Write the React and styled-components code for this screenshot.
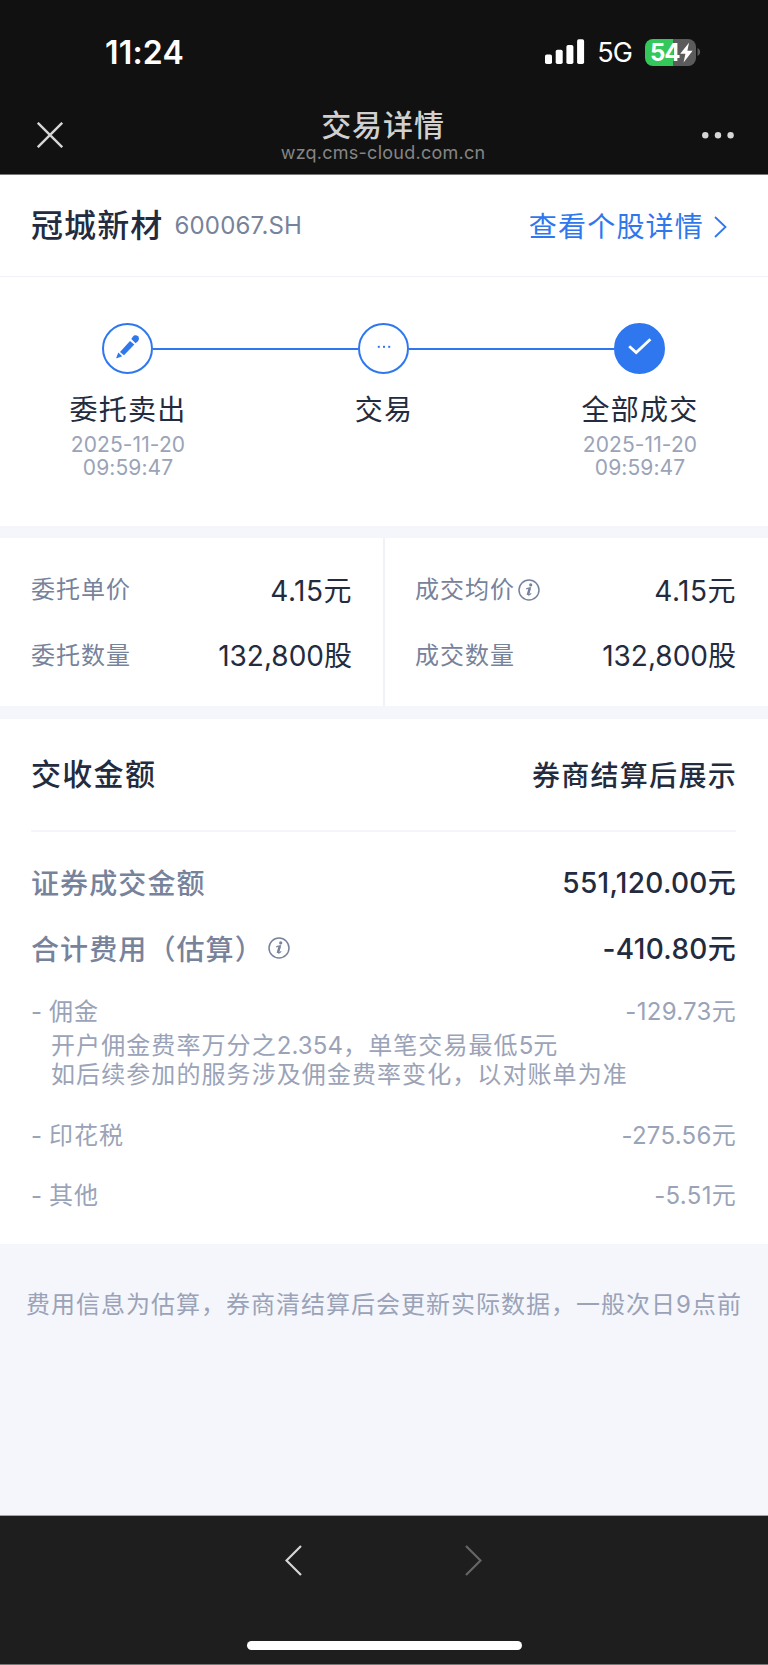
import styled, { createGlobalStyle, ThemeProvider } from "styled-components";

const theme = {
  ink: "#232b3e",
  label: "#77829b",
  muted: "#9aa3b8",
  blue: "#2f77ee",
  pageBg: "#f4f6fb",
  borderColor: "#f0f2f8",
};

const GlobalStyles = createGlobalStyle`
  * {
    box-sizing: border-box;
  }
  body {
    margin: 0;
    background-color: #1e1e1e;
    font-family: Inter, "Noto Sans CJK SC", sans-serif;
    -webkit-font-smoothing: antialiased;
  }
  svg {
    display: block;
    flex-shrink: 0;
  }
`;

const Screen = styled.div`
  width: 768px;
  height: 1665px;
  display: flex;
  flex-direction: column;
  overflow: hidden;
  white-space: nowrap;
  color: ${(props) => props.theme.ink};
`;

/* top bars */

const TopArea = styled.header`
  height: 175px;
  flex-shrink: 0;
  background-color: #111111;
  border-bottom: 1px solid #777777;
`;

const StatusBar = styled.div`
  height: 105px;
  display: flex;
  justify-content: space-between;
  padding: 32px 67px 0 105px;
  color: white;
`;

const Clock = styled.div`
  font-size: 32px;
  line-height: 41px;
  font-weight: 600;
  letter-spacing: 0.2px;
`;

const StatusRight = styled.div`
  height: 40px;
  display: flex;
  align-items: center;
`;

const Network = styled.span`
  margin: 2px 13px 0 12px;
  font-size: 27px;
  line-height: 32px;
  letter-spacing: -0.9px;
`;

const Battery = styled.div`
  width: 51px;
  height: 27px;
  display: flex;
  align-items: center;
  padding-left: 5px;
  border-radius: 8px;
  background: linear-gradient(to right, #34c759 54%, #5b5b5b 54%);
  font-size: 24px;
  line-height: 27px;
  font-weight: 700;
  letter-spacing: -1px;
`;

const NavBar = styled.div`
  display: flex;
  align-items: flex-start;
  justify-content: space-between;
  padding: 0 34px 0 37px;
`;

const NavIcon = styled.div`
  width: 32px;
  padding-top: 17px;
`;

const NavTitle = styled.div`
  margin-right: 5px;
  padding-top: 1px;
  text-align: center;
`;

const PageName = styled.div`
  font-size: 30px;
  line-height: 38px;
  font-weight: 500;
  letter-spacing: 0.9px;
  color: #d0d0d0;
`;

const PageUrl = styled.div`
  font-size: 18px;
  line-height: 20px;
  margin-top: -1px;
  letter-spacing: 0.25px;
  color: #858585;
`;

/* stock header */

const Panel = styled.section`
  flex-shrink: 0;
  background-color: white;
`;

const StockRow = styled.div`
  height: 102px;
  display: flex;
  align-items: center;
  justify-content: space-between;
  padding: 0 41px 0 31px;
  border-bottom: 1px solid ${(props) => props.theme.borderColor};
`;

const StockInfo = styled.div`
  display: flex;
  align-items: center;
`;

const StockName = styled.h1`
  margin: 0;
  font-size: 32px;
  line-height: 40px;
  font-weight: 500;
  letter-spacing: 1.1px;
`;

const StockCode = styled.span`
  margin-left: 11px;
  font-size: 24px;
  letter-spacing: 0.2px;
  color: ${(props) => props.theme.label};
`;

const StockLink = styled.a`
  display: flex;
  align-items: center;
  gap: 10px;
  padding-top: 2px;
  font-size: 28px;
  line-height: 36px;
  letter-spacing: 1.2px;
  color: ${(props) => props.theme.blue};
`;

/* progress */

const Progress = styled.div`
  height: 249px;
  padding-top: 46px;
`;

const Track = styled.div`
  display: flex;
  align-items: center;
  padding: 0 103px 0 102px;
`;

const Dot = styled.div`
  width: 51px;
  height: 51px;
  display: flex;
  align-items: center;
  justify-content: center;
  border: 2px solid ${(props) => props.theme.blue};
  border-radius: 50%;
  background-color: ${(props) => (props.$done ? props.theme.blue : "white")};
`;

const Connector = styled.div`
  flex: 1;
  height: 2px;
  background-color: ${(props) => props.theme.blue};
`;

const Steps = styled.div`
  display: grid;
  grid-template-columns: repeat(3, 1fr);
  margin-top: 18px;
  text-align: center;
`;

const StepName = styled.div`
  font-size: 28px;
  line-height: 36px;
  letter-spacing: 1.2px;
`;

const StepTime = styled.div`
  margin-top: 5px;
  font-size: 21px;
  line-height: 23.3px;
  letter-spacing: 0.1px;
  color: ${(props) => props.theme.muted};
`;

const Divider = styled.div`
  flex-shrink: 0;
  height: ${(props) => props.$height}px;
  background-color: ${(props) => props.theme.pageBg};
`;

/* prices */

const Prices = styled(Panel)`
  height: 168px;
  display: grid;
  grid-template-columns: 383px 385px;
`;

const PriceColumn = styled.div`
  padding: 19px 31px 0 31px;
  & + & {
    border-left: 2px solid ${(props) => props.theme.borderColor};
    padding-left: 30px;
    padding-right: 32px;
  }
`;

const Row = styled.div`
  height: ${(props) => props.$height}px;
  display: flex;
  align-items: center;
  justify-content: space-between;
`;

const Label = styled.span`
  display: flex;
  align-items: center;
  font-size: 24px;
  line-height: 32px;
  letter-spacing: 1px;
  color: ${(props) => props.theme.label};
  svg {
    margin-left: 3px;
  }
`;

const Value = styled.span`
  font-size: 28px;
  line-height: 36px;
  letter-spacing: ${(props) => props.$tracking || 0}px;
`;

const PriceRow = styled(Row)`
  height: 66px;
  &:first-child ${Value} {
    padding-top: 1px;
  }
`;

/* settlement */

const Settlement = styled(Panel)`
  height: 525px;
  padding: 0 32px 0 31px;
`;

const SettlementHead = styled.div`
  height: 113px;
  display: flex;
  align-items: center;
  justify-content: space-between;
  border-bottom: 2px solid #f5f6f9;
  margin-bottom: 18px;
  font-weight: 500;
`;

const SettlementTitle = styled.h2`
  margin: 0 0 2px;
  font-size: 30px;
  line-height: 40px;
  font-weight: 500;
  letter-spacing: 1.3px;
`;

const SettlementStatus = styled.span`
  margin: 2px -1px 0 0;
  font-size: 28px;
  line-height: 38px;
  letter-spacing: 1.3px;
`;

const StrongLabel = styled(Label)`
  padding-top: 1px;
  font-size: 28px;
  line-height: 38px;
  font-weight: 500;
  letter-spacing: 1.1px;
  svg {
    margin: 0 0 3px 4px;
  }
`;

const StrongValue = styled(Value)`
  font-weight: 500;
`;

const FeeRow = styled(Row)`
  height: ${(props) => (props.$withNote ? 41 : 60)}px;
  margin-top: ${(props) => (props.$withNote ? 9 : 0)}px;
`;

const FeeLabel = styled(Label)`
  color: ${(props) => props.theme.muted};
  gap: 6px;
`;

const FeeValue = styled(Value)`
  font-size: 24px;
  line-height: 32px;
  color: ${(props) => props.theme.muted};
`;

const FeeNote = styled.div`
  margin-bottom: 17px;
  padding-left: 20px;
  font-size: 24px;
  line-height: 28.5px;
  letter-spacing: 1.08px;
  color: ${(props) => props.theme.muted};
`;

const Digits = styled.span`
  letter-spacing: 0.1px;
`;

const Footnote = styled.div`
  flex: 1;
  padding: 43px 0 0 26px;
  background-color: ${(props) => props.theme.pageBg};
  font-size: 24px;
  line-height: 36px;
  letter-spacing: 1px;
  color: ${(props) => props.theme.muted};
`;

/* browser toolbar */

const BottomBar = styled.footer`
  height: 150px;
  flex-shrink: 0;
  display: flex;
  flex-direction: column;
  align-items: center;
  justify-content: space-between;
  padding: 29px 0 14px;
  border-top: 1px solid #a2a5a5;
  border-bottom: 1px solid #777777;
  background-color: #1e1e1e;
`;

const HistoryButtons = styled.div`
  width: 197px;
  margin-right: 1px;
  display: flex;
  justify-content: space-between;
`;

const HomeIndicator = styled.div`
  width: 275px;
  height: 9px;
  border-radius: 5px;
  background-color: white;
`;

function Signal() {
  return (
    <svg width="40" height="26" viewBox="0 0 40 26" fill="white">
      <rect x="0" y="15.5" width="7" height="9.5" rx="1.8" />
      <rect x="10.7" y="10.8" width="7" height="14.2" rx="1.8" />
      <rect x="21.4" y="6" width="7" height="19" rx="1.8" />
      <rect x="32.1" y="0.3" width="7" height="24.7" rx="1.8" />
    </svg>
  );
}

function Bolt() {
  return (
    <svg width="13" height="23" viewBox="0 0 13 23" fill="white">
      <path d="M9 1.8 L0.2 12.8 H5.4 L3.6 21.4 L12.6 9.8 H7.4 Z" />
    </svg>
  );
}

function InfoIcon() {
  return (
    <svg width="22" height="22" viewBox="0 0 22 22" fill="none" stroke="#77829b">
      <circle cx="11" cy="11" r="10" strokeWidth="1.5" />
      <circle cx="12.7" cy="5.9" r="1.6" fill="#77829b" stroke="none" />
      <path
        d="M8.2 9.8 C9.6 9.6 10.9 9.2 12.3 8.8 L10.3 15.2 C10 16.5 11.7 15.9 13.2 14.3"
        strokeWidth="1.2"
      />
      <path d="M11.7 9.3 L9.8 16" strokeWidth="2.4" />
    </svg>
  );
}

function Chevron({ width, height, color, stroke, left }) {
  const d = left
    ? `M${width - 1} 1 L1.5 ${height / 2} L${width - 1} ${height - 1}`
    : `M1 1 L${width - 1.5} ${height / 2} L1 ${height - 1}`;
  return (
    <svg width={width} height={height} fill="none" stroke={color} strokeWidth={stroke}>
      <path d={d} />
    </svg>
  );
}

const prices = [
  [
    { label: "委托单价", value: "4.15元", tracking: 0.5 },
    { label: "委托数量", value: "132,800股" },
  ],
  [
    { label: "成交均价", value: "4.15元", tracking: 0.5, info: true },
    { label: "成交数量", value: "132,800股" },
  ],
];

const steps = [
  { name: "委托卖出", date: "2025-11-20", time: "09:59:47" },
  { name: "交易" },
  { name: "全部成交", date: "2025-11-20", time: "09:59:47" },
];

function App() {
  return (
    <ThemeProvider theme={theme}>
      <GlobalStyles />
      <Screen>
        <TopArea>
          <StatusBar>
            <Clock>11:24</Clock>
            <StatusRight>
              <Signal />
              <Network>5G</Network>
              <Battery>
                54
                <Bolt />
              </Battery>
              <svg width="5" height="10" viewBox="0 0 5 10" fill="#5b5b5b">
                <path d="M1.5 1 C5 2.5 5 7.5 1.5 9 Z" />
              </svg>
            </StatusRight>
          </StatusBar>
          <NavBar>
            <NavIcon>
              <svg width="26" height="26" fill="none" stroke="#d6d6d6" strokeWidth="2.4">
                <path d="M0.8 0.8 L25.2 25.2 M25.2 0.8 L0.8 25.2" />
              </svg>
            </NavIcon>
            <NavTitle>
              <PageName>交易详情</PageName>
              <PageUrl>wzq.cms-cloud.com.cn</PageUrl>
            </NavTitle>
            <NavIcon>
              <svg width="32" height="26" fill="#d6d6d6">
                <circle cx="3.3" cy="13.3" r="3.2" />
                <circle cx="16" cy="13.3" r="3.2" />
                <circle cx="28.6" cy="13.3" r="3.2" />
              </svg>
            </NavIcon>
          </NavBar>
        </TopArea>

        <Panel>
          <StockRow>
            <StockInfo>
              <StockName>冠城新材</StockName>
              <StockCode>600067.SH</StockCode>
            </StockInfo>
            <StockLink>
              查看个股详情
              <Chevron width={13} height={22} color={theme.blue} stroke={1.8} />
            </StockLink>
          </StockRow>
          <Progress>
            <Track>
              <Dot>
                <svg width="24" height="28" viewBox="0 0 24 28" fill={theme.blue}>
                  <path d="M15.3 4 L16.8 1.8 C18.2 -0.1 20.6 0 22 1.2 C23.4 2.7 23.2 4.8 21.8 6.2 L19.6 8.2 Z" />
                  <path d="M4 17 L14 6 L18.3 9.6 L8 20.2 Z" />
                  <path d="M2.3 17.4 L6.2 21.2 L0.8 23.2 C0.3 23.2 0.2 22.8 0.4 22.4 Z" />
                </svg>
              </Dot>
              <Connector />
              <Dot>
                <svg width="14" height="8" viewBox="0 0 14 8" fill={theme.blue}>
                  <rect x="0.8" y="0.8" width="2" height="2" />
                  <rect x="6" y="0.8" width="2" height="2" />
                  <rect x="11.2" y="0.8" width="2" height="2" />
                </svg>
              </Dot>
              <Connector />
              <Dot $done>
                <svg width="24" height="21" viewBox="0 0 24 21" fill="none" stroke="white">
                  <path d="M1.2 8.2 L8.2 14.6 L22.4 1.2" strokeWidth="2.8" />
                </svg>
              </Dot>
            </Track>
            <Steps>
              {steps.map((step) => (
                <div key={step.name}>
                  <StepName>{step.name}</StepName>
                  {step.date && (
                    <StepTime>
                      {step.date}
                      <br />
                      {step.time}
                    </StepTime>
                  )}
                </div>
              ))}
            </Steps>
          </Progress>
        </Panel>

        <Divider $height={12} />

        <Prices>
          {prices.map((column, index) => (
            <PriceColumn key={index}>
              {column.map((item) => (
                <PriceRow key={item.label}>
                  <Label>
                    {item.label}
                    {item.info && <InfoIcon />}
                  </Label>
                  <Value $tracking={item.tracking}>{item.value}</Value>
                </PriceRow>
              ))}
            </PriceColumn>
          ))}
        </Prices>

        <Divider $height={13} />

        <Settlement>
          <SettlementHead>
            <SettlementTitle>交收金额</SettlementTitle>
            <SettlementStatus>券商结算后展示</SettlementStatus>
          </SettlementHead>
          <Row $height={66}>
            <StrongLabel>证券成交金额</StrongLabel>
            <StrongValue $tracking={0.3}>551,120.00元</StrongValue>
          </Row>
          <Row $height={66}>
            <StrongLabel>
              合计费用（估算）
              <InfoIcon />
            </StrongLabel>
            <StrongValue $tracking={0.3}>-410.80元</StrongValue>
          </Row>
          <FeeRow $withNote>
            <FeeLabel>
              <span>-</span>佣金
            </FeeLabel>
            <FeeValue $tracking={0.3}>-129.73元</FeeValue>
          </FeeRow>
          <FeeNote>
            开户佣金费率万分之<Digits>2.354</Digits>，单笔交易最低<Digits>5</Digits>元
            <br />
            如后续参加的服务涉及佣金费率变化，以对账单为准
          </FeeNote>
          <FeeRow>
            <FeeLabel>
              <span>-</span>印花税
            </FeeLabel>
            <FeeValue $tracking={0.3}>-275.56元</FeeValue>
          </FeeRow>
          <FeeRow>
            <FeeLabel>
              <span>-</span>其他
            </FeeLabel>
            <FeeValue $tracking={0.3}>-5.51元</FeeValue>
          </FeeRow>
        </Settlement>

        <Footnote>费用信息为估算，券商清结算后会更新实际数据，一般次日9点前</Footnote>

        <BottomBar>
          <HistoryButtons>
            <Chevron width={17} height={31} color="#d6d6d6" stroke={2.2} left />
            <Chevron width={17} height={31} color="#666666" stroke={2.2} />
          </HistoryButtons>
          <HomeIndicator />
        </BottomBar>
      </Screen>
    </ThemeProvider>
  );
}

export default App;
